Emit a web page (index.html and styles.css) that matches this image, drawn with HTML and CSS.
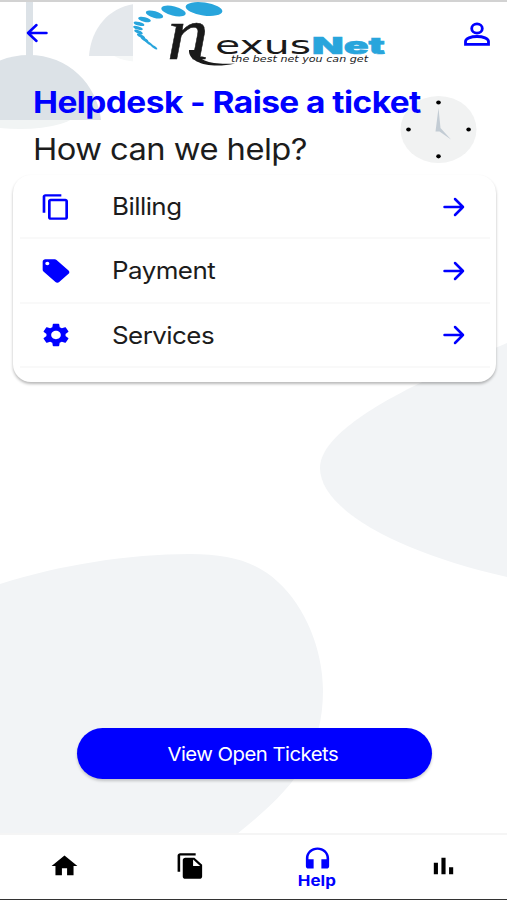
FILE: index.html
```
<!DOCTYPE html>
<html lang="en">
<head>
    <meta charset="UTF-8">
    <meta name="viewport" content="width=device-width, initial-scale=1.0">
    <title>NexusNet - Helpdesk</title>
    <link rel="stylesheet" href="styles.css">
</head>
<body>
    <div class="app">
        <!-- Background shapes -->
        <svg class="backdrop" viewBox="0 0 507 834" aria-hidden="true">
            <ellipse cx="20" cy="112" rx="57" ry="17" fill="#f1f4f4"/>
            <rect x="26" y="0" width="7" height="60" fill="#dce2e7"/>
            <path d="M-45 120C-40 82-10 55 29 55C68 55 97 84 101 120Z" fill="#dce2e7"/>
            <ellipse cx="142" cy="50" rx="32" ry="12" fill="#f6f8f8"/>
            <path d="M89 56C91 29 108 8 134 4V56Z" fill="#e4e8ec"/>
            <path d="M507 343C478 355 444 371 410 388C373 407 320 438 320 468C320 510 400 553 507 577Z" fill="#f2f4f6"/>
            <path d="M0 584C60 565 128 554 190 554C230 554 257 562 278 582C305 606 323 650 323 690C323 755 292 790 237 834H0Z" fill="#f2f4f6"/>
            <ellipse cx="438.500" cy="129.500" rx="38" ry="33.500" fill="#f1f2f2"/>
            <path d="M438.500 108L440.500 128L451 139.500L439.500 131.500H435.500Z" fill="#c3ccd4"/>
            <g fill="#000">
                <ellipse cx="438.500" cy="102.500" rx="2.300" ry="2.100"/>
                <ellipse cx="438.500" cy="156.300" rx="2.300" ry="2.100"/>
                <ellipse cx="408.500" cy="129.500" rx="2.300" ry="2.100"/>
                <ellipse cx="468.600" cy="129.500" rx="2.300" ry="2.100"/>
            </g>
        </svg>

        <header class="topbar">
            <svg class="back" viewBox="0 0 22 20">
                <path d="M20.500 10H2M10.500 2L2 10L10.500 18"/>
            </svg>
            <svg class="logo" viewBox="133 2 255 66">
                <rect x="133" y="2" width="255" height="66" fill="#fff"/>
                <g fill="#28a5dc">
                    <ellipse cx="204" cy="9" rx="18.500" ry="6.500" transform="rotate(8 204 9)"/>
                    <ellipse cx="173.500" cy="11" rx="12.500" ry="4.600" transform="rotate(14 173.500 11)"/>
                    <ellipse cx="154.500" cy="14.500" rx="9" ry="3.300" transform="rotate(16 154.500 14.500)"/>
                    <ellipse cx="144.500" cy="19.500" rx="6.500" ry="2.300" transform="rotate(14 144.500 19.500)"/>
                    <ellipse cx="139" cy="23.800" rx="5.500" ry="1.800" transform="rotate(14 139 23.800)"/>
                    <ellipse cx="138" cy="28" rx="5" ry="1.700" transform="rotate(18 138 28)"/>
                    <ellipse cx="138.500" cy="32" rx="4.500" ry="1.600" transform="rotate(22 138.500 32)"/>
                    <ellipse cx="141" cy="36" rx="4.500" ry="1.500" transform="rotate(28 141 36)"/>
                    <ellipse cx="144.500" cy="39.500" rx="4.500" ry="1.400" transform="rotate(32 144.500 39.500)"/>
                    <ellipse cx="149" cy="43.200" rx="4.500" ry="1.200" transform="rotate(34 149 43.200)"/>
                    <ellipse cx="154" cy="47" rx="4" ry="1.100" transform="rotate(36 154 47)"/>
                </g>
                <text class="logo-initial" x="167" y="59" textLength="42" lengthAdjust="spacingAndGlyphs">n</text>
                <path d="M196 50C197 61 212 65 235 63.500C211 69 188 63 189 50Z" fill="#1a1a1a"/>
                <text class="logo-name" x="215" y="54" textLength="96" lengthAdjust="spacingAndGlyphs">exus</text>
                <text class="logo-net" x="312" y="53.500" textLength="73" lengthAdjust="spacingAndGlyphs">Net</text>
                <text class="logo-tag" x="231" y="62" textLength="137" lengthAdjust="spacingAndGlyphs">the best net you can get</text>
            </svg>
            <svg class="profile" viewBox="0 0 26 24">
                <ellipse cx="13" cy="6.500" rx="5.300" ry="4.700"/>
                <path d="M1.500 22.300V19.500C1.500 16.500 7 14.500 13 14.500S24.500 16.500 24.500 19.500V22.300Z"/>
            </svg>
        </header>

        <main class="content">
            <h1 class="title"><span>Helpdesk - Raise a ticket</span></h1>
            <h2 class="subtitle"><span>How can we help?</span></h2>

            <div class="card">
                <div class="row">
                    <svg class="row-icon" viewBox="0 0 24 24" preserveAspectRatio="none"><path d="M16 1H4c-1.100 0-2 .9-2 2v14h2V3h12V1zm3 4H8c-1.100 0-2 .9-2 2v14c0 1.100.9 2 2 2h11c1.100 0 2-.9 2-2V7c0-1.100-.9-2-2-2zm0 16H8V7h11v14z"/></svg>
                    <span class="row-label">Billing</span>
                    <svg class="arrow" viewBox="0 0 22 20"><path d="M1.500 10H20M12 2L20 10L12 18"/></svg>
                </div>
                <div class="row">
                    <svg class="row-icon" viewBox="0 0 24 24" preserveAspectRatio="none"><path d="M21.410 11.580l-9-9C12.050 2.220 11.550 2 11 2H4c-1.100 0-2 .9-2 2v7c0 .55.22 1.050.59 1.420l9 9c.36.36.86.58 1.410.58.55 0 1.050-.22 1.410-.59l7-7c.37-.36.59-.86.59-1.410 0-.55-.23-1.060-.59-1.420zM5.500 7C4.670 7 4 6.330 4 5.500S4.670 4 5.500 4 7 4.670 7 5.500 6.330 7 5.500 7z"/></svg>
                    <span class="row-label">Payment</span>
                    <svg class="arrow" viewBox="0 0 22 20"><path d="M1.500 10H20M12 2L20 10L12 18"/></svg>
                </div>
                <div class="row">
                    <svg class="row-icon" viewBox="0 0 24 24" preserveAspectRatio="none"><path d="M19.140 12.940c.04-.3.06-.61.06-.94 0-.32-.02-.64-.07-.94l2.030-1.580c.18-.14.23-.41.12-.61l-1.920-3.320c-.12-.22-.37-.29-.59-.22l-2.390.96c-.5-.38-1.030-.7-1.620-.94l-.36-2.540c-.04-.24-.24-.41-.48-.41h-3.840c-.24 0-.43.17-.47.41l-.36 2.540c-.59.24-1.130.57-1.620.94l-2.390-.96c-.22-.08-.47 0-.59.22L2.740 8.870c-.12.21-.08.47.12.61l2.030 1.580c-.05.3-.09.63-.09.94s.02.64.07.94l-2.030 1.580c-.18.14-.23.41-.12.61l1.920 3.320c.12.22.37.29.59.22l2.390-.96c.5.38 1.030.7 1.620.94l.36 2.540c.05.24.24.41.48.41h3.840c.24 0 .44-.17.47-.41l.36-2.540c.59-.24 1.130-.56 1.620-.94l2.390.96c.22.08.47 0 .59-.22l1.920-3.320c.12-.22.07-.47-.12-.61l-2.010-1.580zM12 15.600c-1.980 0-3.600-1.620-3.600-3.600s1.620-3.600 3.600-3.600 3.600 1.620 3.600 3.600-1.620 3.600-3.600 3.600z"/></svg>
                    <span class="row-label">Services</span>
                    <svg class="arrow" viewBox="0 0 22 20"><path d="M1.500 10H20M12 2L20 10L12 18"/></svg>
                </div>
            </div>

            <button class="open-tickets"><span>View Open Tickets</span></button>
        </main>

        <nav class="tabs">
            <a class="tab">
                <svg viewBox="0 0 24 24" preserveAspectRatio="none"><path d="M10 20v-6h4v6h5v-8h3L12 3 2 12h3v8z"/></svg>
            </a>
            <a class="tab">
                <svg viewBox="0 0 24 24" preserveAspectRatio="none"><path d="M16 1H4c-1.100 0-2 .9-2 2v14h2V3h12V1zm-1 4l6 6v10c0 1.100-.9 2-2 2H7.990C6.890 23 6 22.100 6 21l.01-14c0-1.100.89-2 1.990-2h7zm-1 7h5.500L14 6.500V12z"/></svg>
            </a>
            <a class="tab active">
                <svg viewBox="0 0 24 24" preserveAspectRatio="none"><path d="M3 12v7c0 1.100.9 2 2 2h4v-8H5v-1c0-3.870 3.130-7 7-7s7 3.130 7 7v1h-4v8h4c1.100 0 2-.9 2-2v-7c0-4.970-4.030-9-9-9s-9 4.030-9 9z"/></svg>
                <span>Help</span>
            </a>
            <a class="tab">
                <svg viewBox="0 0 24 24" preserveAspectRatio="none"><path d="M4.500 9.200h3.200V19H4.500zM10.400 5h3.200v14h-3.200zM16.300 13h3.200v6h-3.200z"/></svg>
            </a>
        </nav>
    </div>
</body>
</html>
```
FILE: styles.css
```
* {
    box-sizing: border-box;
}

body {
    margin: 0;
    background-color: #fff;
    font-family: 'Inter', sans-serif;
    color: #1c1c1c;
    overflow: hidden;
}

.app {
    position: relative;
    display: flex;
    flex-direction: column;
    height: 900px;
    border-top: 2px solid #d2d2d2;
    border-bottom: 1px solid #333;
}

.backdrop {
    position: absolute;
    top: -2px;
    left: 0;
    width: 507px;
    height: 834px;
    clip-path: inset(2px 0 0 0);
}

/* Header */
.topbar {
    position: relative;
    display: flex;
    align-items: flex-start;
    height: 66px;
    padding: 0 17px 0 26px;
}

.back,
.arrow {
    width: 22px;
    height: 20px;
    fill: none;
    stroke: #0000ff;
    stroke-width: 2.5;
    stroke-linecap: round;
    stroke-linejoin: round;
}

.back {
    margin-top: 21px;
}

.logo {
    width: 255px;
    height: 66px;
    margin-left: 85px;
    overflow: visible;
}

.profile {
    width: 26px;
    height: 24px;
    margin: 20px 0 0 auto;
    fill: none;
    stroke: #0000ff;
    stroke-width: 2.8;
}

.logo-initial {
    font: italic 82px 'Liberation Serif', serif;
    font-size: 76px;
    fill: #1a1a1a;
    stroke: #1a1a1a;
    stroke-width: 0.5;
}

.logo-name {
    font: 24px 'DejaVu Sans', sans-serif;
    fill: #1a1a1a;
}

.logo-net {
    font: 900 23px 'Inter', sans-serif;
    fill: #28a5dc;
    stroke: #28a5dc;
    stroke-width: 0.6;
}

.logo-tag {
    font: oblique 9px 'DejaVu Sans', sans-serif;
    fill: #1a1a1a;
}

/* Content */
.content {
    position: relative;
    display: flex;
    flex-direction: column;
    flex: 1;
}

.title,
.subtitle {
    margin: 0 0 0 33px;
    font-size: 30px;
    white-space: nowrap;
}

.title {
    height: 58px;
    line-height: 69px;
    font-weight: 700;
    color: #0000ff;
}

.subtitle {
    height: 49px;
    line-height: 47px;
    font-weight: 400;
}

.title span,
.subtitle span,
.row-label,
.open-tickets span,
.tab span {
    display: inline-block;
    letter-spacing: -0.5px;
    transform: scaleX(1.09);
    transform-origin: left center;
}

.title span {
    transform: scaleX(1.115);
}

.card {
    height: 207px;
    margin: 0 11px 0 13px;
    padding: 0 6px 0 7px;
    border-radius: 18px;
    background-color: #fff;
    box-shadow: 0 2px 3px rgba(0, 0, 0, 0.28);
}

.row {
    display: flex;
    align-items: center;
    height: 64.300px;
    padding: 1px 25.500px 0 19.500px;
    border-bottom: 2px solid #f9f9f9;
}

.row-icon {
    width: 32px;
    height: 28px;
    fill: #0000ff;
}

.row-label {
    margin-left: 40px;
    font-size: 24px;
    transform: scaleX(1.08);
}

.arrow {
    margin-left: auto;
}

.open-tickets {
    width: 355px;
    height: 51px;
    margin: auto 0 54.500px 77px;
    padding: 2px 3px 0 0;
    border: none;
    border-radius: 26px;
    background-color: #0000ff;
    color: #fff;
    font-family: inherit;
    font-size: 19px;
    box-shadow: 0 2px 3px rgba(0, 0, 0, 0.2);
}

.open-tickets span,
.tab span {
    transform-origin: center;
}

.open-tickets span {
    transform: scaleX(1.07);
}

.tab span {
    letter-spacing: 0;
    transform: scaleX(1.13);
}

/* Bottom tabs */
.tabs {
    position: relative;
    display: flex;
    height: 66px;
    padding: 0 0 2px 1px;
    border-top: 2px solid #f5f5f5;
    background-color: #fff;
}

.tab {
    display: flex;
    flex: 1;
    flex-direction: column;
    align-items: center;
    justify-content: center;
    color: #0000ff;
    font-size: 15px;
    font-weight: 700;
    line-height: 18px;
}

.tab svg {
    width: 31px;
    height: 28px;
}

.tab.active {
    padding-top: 2px;
}

.tab.active svg {
    fill: #0000ff;
}
```
